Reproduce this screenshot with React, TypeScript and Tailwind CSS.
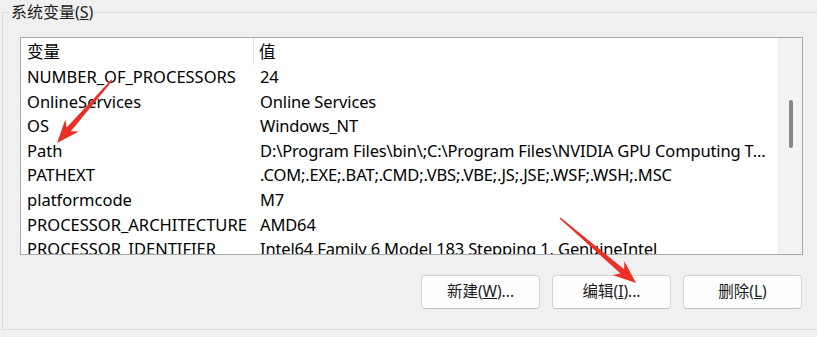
import React from 'react';

const rows: [string, string][] = [
  ['NUMBER_OF_PROCESSORS', '24'],
  ['OnlineServices', 'Online Services'],
  ['OS', 'Windows_NT'],
  ['Path', 'D:\\Program Files\\bin\\;C:\\Program Files\\NVIDIA GPU Computing T...'],
  ['PATHEXT', '.COM;.EXE;.BAT;.CMD;.VBS;.VBE;.JS;.JSE;.WSF;.WSH;.MSC'],
  ['platformcode', 'M7'],
  ['PROCESSOR_ARCHITECTURE', 'AMD64'],
  ['PROCESSOR_IDENTIFIER', 'Intel64 Family 6 Model 183 Stepping 1, GenuineIntel'],
];

// tapered red annotation arrow, tail -> tip
const arrowPoints = (x1: number, y1: number, x2: number, y2: number) => {
  const dx = x2 - x1;
  const dy = y2 - y1;
  const len = Math.hypot(dx, dy);
  const ux = dx / len;
  const uy = dy / len;
  const nx = -uy;
  const ny = ux;
  const headLen = 23;
  const headW = 9;
  const bx = x2 - ux * headLen;
  const by = y2 - uy * headLen;
  const nbx = x2 - ux * (headLen - 5);
  const nby = y2 - uy * (headLen - 5);
  const pts = [
    [x1 + nx * 0.8, y1 + ny * 0.8],
    [nbx + nx * 2.8, nby + ny * 2.8],
    [bx + nx * headW, by + ny * headW],
    [x2, y2],
    [bx - nx * headW, by - ny * headW],
    [nbx - nx * 2.8, nby - ny * 2.8],
    [x1 - nx * 0.8, y1 - ny * 0.8],
  ];
  return pts.map((p) => `${p[0].toFixed(1)},${p[1].toFixed(1)}`).join(' ');
};

const Button = ({ children }: { children: React.ReactNode }) => (
  <button className="w-[119px] h-[34px] rounded-[4px] border border-[#d3d3d3] border-b-[#c2c2c2] bg-[#fdfdfd] text-[15.5px] text-[#1b1b1b]">
    {children}
  </button>
);

export default function App() {
  return (
    <div
      className="relative w-[817px] h-[337px] overflow-hidden bg-[#f0f0f0] text-black"
      style={{ fontFamily: '"Noto Sans", "Noto Sans CJK SC", sans-serif' }}
    >
      <fieldset className="ml-[2px] w-[840px] h-[330px] border border-[#dcdcdc] p-0">
        <legend className="ml-[6px] px-[2px] text-[16px] leading-[24px] text-[#1b1b1b]">
          系统变量(<u>S</u>)
        </legend>

        <div className="pl-[17px] pt-[13px]">
          {/* list view */}
          <div className="flex w-[783px] h-[218px] border border-[#a9a9a9] bg-white overflow-hidden">
            <div className="flex-1 overflow-hidden text-[16.5px]">
              <div className="flex h-[27px] items-center">
                <div className="w-[233px] h-full pl-[6px] leading-[27px] border-r border-[#e5e5e5]">变量</div>
                <div className="flex-1 pl-[5px] leading-[27px]">值</div>
              </div>
              {rows.map(([name, value]) => (
                <div key={name} className="flex h-[24.6px] leading-[24.6px] whitespace-nowrap">
                  <div className="w-[233px] pl-[6px] overflow-hidden">{name}</div>
                  <div className="flex-1 pl-[6px] overflow-hidden tracking-[-0.15px]">{value}</div>
                </div>
              ))}
            </div>
            {/* scrollbar */}
            <div className="w-[24px] bg-[#f3f3f3] border-l border-[#ececec] flex justify-center pt-[62px]">
              <div className="w-[4px] h-[48px] rounded-full bg-[#868686]" />
            </div>
          </div>

          <div className="flex w-[782px] justify-end gap-[12px] mt-[20px]">
            <Button>
              新建(<u>W</u>)...
            </Button>
            <Button>
              编辑(<u>I</u>)...
            </Button>
            <Button>
              删除(<u>L</u>)
            </Button>
          </div>
        </div>
      </fieldset>

      {/* annotation arrows */}
      <svg className="absolute inset-0 pointer-events-none" width="817" height="337">
        <polygon points={arrowPoints(112, 80, 57, 143)} fill="#ea2f24" />
        <polygon points={arrowPoints(560, 218, 636, 283)} fill="#ea2f24" />
      </svg>
    </div>
  );
}
